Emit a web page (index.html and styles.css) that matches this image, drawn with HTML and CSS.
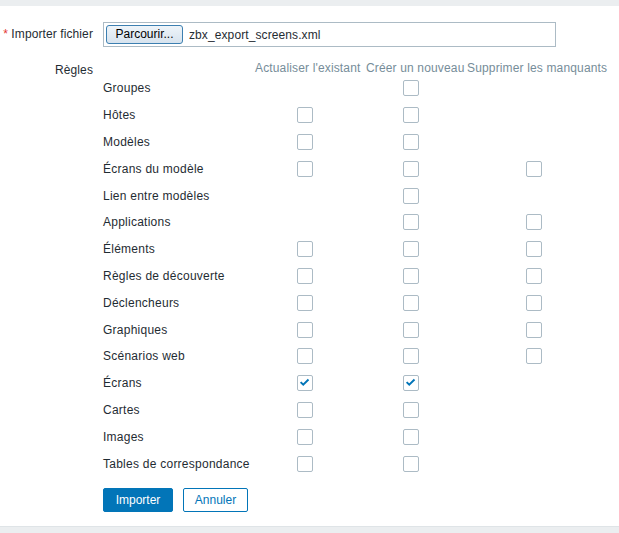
FILE: index.html
```html
<!DOCTYPE html>
<html lang="fr">
<head>
    <meta charset="UTF-8">
    <title>Importer</title>
    <link rel="stylesheet" href="styles.css">
</head>
<body>
    <div class="panel">
        <div class="form-grid">
            <div class="form-label file-label"><span class="required">*</span> Importer fichier</div>
            <div class="file-input">
                <span class="browse-btn">Parcourir...</span>
                <span class="file-name">zbx_export_screens.xml</span>
            </div>

            <div class="form-label rules-label">Règles</div>
            <div class="rules">
                <div class="head"></div>
                <div class="head">Actualiser l'existant</div>
                <div class="head">Créer un nouveau</div>
                <div class="head">Supprimer les manquants</div>

                <div class="name">Groupes</div>
                <div class="c1"></div>
                <div class="c2"><span class="cb"></span></div>
                <div class="c3"></div>

                <div class="name">Hôtes</div>
                <div class="c1"><span class="cb"></span></div>
                <div class="c2"><span class="cb"></span></div>
                <div class="c3"></div>

                <div class="name">Modèles</div>
                <div class="c1"><span class="cb"></span></div>
                <div class="c2"><span class="cb"></span></div>
                <div class="c3"></div>

                <div class="name">Écrans du modèle</div>
                <div class="c1"><span class="cb"></span></div>
                <div class="c2"><span class="cb"></span></div>
                <div class="c3"><span class="cb"></span></div>

                <div class="name">Lien entre modèles</div>
                <div class="c1"></div>
                <div class="c2"><span class="cb"></span></div>
                <div class="c3"></div>

                <div class="name">Applications</div>
                <div class="c1"></div>
                <div class="c2"><span class="cb"></span></div>
                <div class="c3"><span class="cb"></span></div>

                <div class="name">Éléments</div>
                <div class="c1"><span class="cb"></span></div>
                <div class="c2"><span class="cb"></span></div>
                <div class="c3"><span class="cb"></span></div>

                <div class="name">Règles de découverte</div>
                <div class="c1"><span class="cb"></span></div>
                <div class="c2"><span class="cb"></span></div>
                <div class="c3"><span class="cb"></span></div>

                <div class="name">Déclencheurs</div>
                <div class="c1"><span class="cb"></span></div>
                <div class="c2"><span class="cb"></span></div>
                <div class="c3"><span class="cb"></span></div>

                <div class="name">Graphiques</div>
                <div class="c1"><span class="cb"></span></div>
                <div class="c2"><span class="cb"></span></div>
                <div class="c3"><span class="cb"></span></div>

                <div class="name">Scénarios web</div>
                <div class="c1"><span class="cb"></span></div>
                <div class="c2"><span class="cb"></span></div>
                <div class="c3"><span class="cb"></span></div>

                <div class="name">Écrans</div>
                <div class="c1"><span class="cb checked"><svg viewBox="0 0 16 16"><polyline points="3,7 6,10 12,4"/></svg></span></div>
                <div class="c2"><span class="cb checked"><svg viewBox="0 0 16 16"><polyline points="3,7 6,10 12,4"/></svg></span></div>
                <div class="c3"></div>

                <div class="name">Cartes</div>
                <div class="c1"><span class="cb"></span></div>
                <div class="c2"><span class="cb"></span></div>
                <div class="c3"></div>

                <div class="name">Images</div>
                <div class="c1"><span class="cb"></span></div>
                <div class="c2"><span class="cb"></span></div>
                <div class="c3"></div>

                <div class="name">Tables de correspondance</div>
                <div class="c1"><span class="cb"></span></div>
                <div class="c2"><span class="cb"></span></div>
                <div class="c3"></div>
            </div>

            <div></div>
            <div class="buttons">
                <button class="btn-primary">Importer</button>
                <button class="btn-alt">Annuler</button>
            </div>
        </div>
    </div>
</body>
</html>
```

FILE: styles.css
```css
body {
    margin: 0;
    background-color: #ebeef0;
    font-family: 'Liberation Sans', Arial, sans-serif;
    font-size: 12px;
    color: #1f2c33;
}

.panel {
    margin-top: 6px;
    background-color: #FFFFFF;
    padding: 16px 0 14px 0;
    border-bottom: 1px solid #dfe4e7;
}

.form-grid {
    display: grid;
    grid-template-columns: 93px 1fr;
    column-gap: 10px;
    row-gap: 13px;
}

.form-label {
    text-align: right;
    letter-spacing: 0.1px;
}

.file-label {
    line-height: 25px;
}

.required {
    color: #e33734;
}

.rules-label {
    line-height: 14px;
    padding-top: 3px;
}

.file-input {
    width: 451px;
    height: 23px;
    border: 1px solid #acbbc5;
    display: flex;
    align-items: center;
}

.browse-btn {
    box-sizing: border-box;
    width: 77px;
    height: 19px;
    margin-left: 2px;
    border: 1px solid #3c7fb1;
    border-radius: 3px;
    background: linear-gradient(#eef4f9, #d7e3ee);
    color: #000;
    line-height: 17px;
    text-align: center;
}

.file-name {
    margin-left: 6px;
    letter-spacing: 0.1px;
}

.rules {
    display: grid;
    grid-template-columns: 152px 111px 101px auto;
    grid-template-rows: 15px;
    grid-auto-rows: 26.8px;
    align-items: center;
}

.name {
    letter-spacing: 0.25px;
}

.head {
    color: #768d99;
    line-height: 14px;
    white-space: nowrap;
    letter-spacing: 0.15px;
}

.c1, .c2, .c3 {
    display: flex;
    align-items: center;
}

.c1 { padding-left: 42px; }
.c2 { padding-left: 37px; }
.c3 { padding-left: 59px; }

.cb {
    box-sizing: border-box;
    width: 16px;
    height: 16px;
    border: 1px solid #acbbc5;
    border-radius: 2px;
    background-color: #FFFFFF;
    display: inline-block;
}

.cb svg {
    display: block;
    width: 14px;
    height: 14px;
}

.cb polyline {
    fill: none;
    stroke: #0275b8;
    stroke-width: 2.2;
}

.buttons {
    display: flex;
    gap: 10px;
    margin-top: -2px;
}

button {
    height: 24px;
    font-family: inherit;
    font-size: 12px;
    border-radius: 2px;
    padding: 0;
    cursor: pointer;
}

.btn-primary {
    width: 70px;
    background-color: #0275b8;
    border: 1px solid #0275b8;
    color: #FFFFFF;
}

.btn-alt {
    width: 65px;
    background-color: #FFFFFF;
    border: 1px solid #0275b8;
    color: #0275b8;
}
```
